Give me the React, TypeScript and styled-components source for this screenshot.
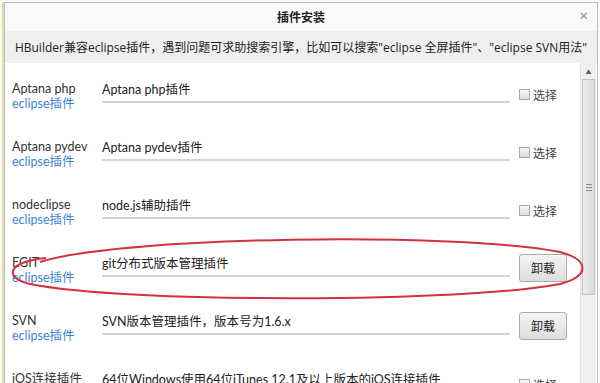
import React from 'react';
import styled, {createGlobalStyle} from "styled-components";

const GlobalStyle = createGlobalStyle`
    html, body {
        margin: 0;
        padding: 0;
        background: #fbfbfb;
        overflow: hidden;
    }
    body {
        font-family: "Open Sans", "Noto Sans CJK SC", sans-serif;
        color: #333;
    }
`

const Page = styled.div`
    position: relative;
    width: 600px;
    height: 383px;
    padding: 2px 2px 0 2px;
    box-sizing: border-box;
    overflow: hidden;
`

const Frame = styled.div`
    display: flex;
    border-left: 2px solid #dde2a4;
    height: 100%;
`

const Dialog = styled.div`
    flex: 1;
    display: flex;
    flex-direction: column;
    border: 1px solid #bdbdbd;
    border-bottom: none;
    background: #ffffff;
    overflow: hidden;
`

const TitleBar = styled.div`
    position: relative;
    height: 28px;
    flex-shrink: 0;
    display: flex;
    align-items: center;
    justify-content: center;
    background: #fafafa;
    font-size: 12px;
    font-weight: bold;
    color: #222;
`

const CloseButton = styled.span`
    position: absolute;
    right: 9px;
    top: 2px;
    font-size: 15px;
    line-height: 20px;
    font-weight: normal;
    color: #888;
`

const InfoBar = styled.div`
    height: 32px;
    flex-shrink: 0;
    display: flex;
    align-items: center;
    justify-content: center;
    background: #efefef;
    font-size: 12px;
    color: #222;
    white-space: nowrap;
`

const Body = styled.div`
    flex-shrink: 0;
    display: flex;
`

const List = styled.div`
    flex: 1;
    display: flex;
    flex-direction: column;
    font-family: "Lato", "Noto Sans CJK SC", sans-serif;
`

const Row = styled.div`
    height: 58px;
    flex-shrink: 0;
    display: flex;
    align-items: flex-start;
    padding-left: 7px;
`

const NameCol = styled.div`
    width: 90px;
    padding-top: 18px;
    display: flex;
    flex-direction: column;
    font-size: 12.5px;
    line-height: 15px;
`

const Name = styled.span`
    color: #333;
    white-space: nowrap;
`

const Link = styled.span`
    color: #3d84d6;
`

const Desc = styled.div`
    width: 408px;
    margin-top: 18px;
    padding-bottom: 2px;
    font-size: 12.5px;
    line-height: 18px;
    color: #222;
    border-bottom: 2px solid #d6d6d6;
    white-space: nowrap;
`

const Action = styled.div`
    margin-left: 9px;
    height: 28px;
    margin-top: 17px;
    display: flex;
    align-items: center;
`

const CheckLabel = styled.label`
    display: flex;
    align-items: center;
    gap: 3px;
    font-size: 12px;
    color: #444;
`

const CheckBox = styled.span`
    width: 9px;
    height: 9px;
    border: 1px solid #a9a9a9;
    background: linear-gradient(#f6f6f6, #dcdcdc);
`

const Button = styled.button`
    width: 48px;
    height: 28px;
    padding: 0;
    border: 1px solid #acacac;
    border-radius: 3px;
    background: linear-gradient(#f4f4f4, #dedede);
    font-family: "Open Sans", "Noto Sans CJK SC", sans-serif;
    font-size: 12px;
    color: #222;
`

const Scrollbar = styled.div`
    width: 15px;
    margin-right: 1px;
    display: flex;
    flex-direction: column;
    background: #efefef;
    border-left: 1px solid #e2e2e2;
`

const Arrow = styled.div`
    height: 16px;
    display: flex;
    align-items: center;
    justify-content: center;
    font-size: 6px;
    color: #606060;
`

const Thumb = styled.div`
    height: 214px;
    margin: 0 1px;
    display: flex;
    align-items: center;
    justify-content: center;
    border: 1px solid #c3c3c3;
    background: linear-gradient(90deg, #ececec, #dadada);
`

const Grip = styled.div`
    width: 6px;
    height: 5px;
    border-top: 1px solid #888;
    border-bottom: 1px solid #888;
    position: relative;
    &::after {
        content: "";
        position: absolute;
        left: 0;
        right: 0;
        top: 2px;
        border-top: 1px solid #888;
    }
`

const Annotation = styled.svg`
    position: absolute;
    left: 0;
    top: 0;
    pointer-events: none;
`

type Plugin = {
    name: string
    link?: string
    desc: string
    installed: boolean
}

const plugins: Plugin[] = [
    {name: "Aptana php", link: "eclipse插件", desc: "Aptana php插件", installed: false},
    {name: "Aptana pydev", link: "eclipse插件", desc: "Aptana pydev插件", installed: false},
    {name: "nodeclipse", link: "eclipse插件", desc: "node.js辅助插件", installed: false},
    {name: "EGIT", link: "eclipse插件", desc: "git分布式版本管理插件", installed: true},
    {name: "SVN", link: "eclipse插件", desc: "SVN版本管理插件，版本号为1.6.x", installed: true},
    {name: "iOS连接插件", desc: "64位Windows使用64位iTunes 12.1及以上版本的iOS连接插件", installed: false},
]

export default function App() {
    return (
        <>
            <GlobalStyle/>
            <Page>
                <Frame>
                    <Dialog>
                        <TitleBar>
                            插件安装
                            <CloseButton>×</CloseButton>
                        </TitleBar>
                        <InfoBar>
                            HBuilder兼容eclipse插件，遇到问题可求助搜索引擎，比如可以搜索"eclipse 全屏插件"、"eclipse SVN用法"
                        </InfoBar>
                        <Body>
                            <List>
                                {plugins.map(p => (
                                    <Row key={p.name}>
                                        <NameCol>
                                            <Name>{p.name}</Name>
                                            {p.link && <Link>{p.link}</Link>}
                                        </NameCol>
                                        <Desc>{p.desc}</Desc>
                                        <Action>
                                            {p.installed
                                                ? <Button>卸载</Button>
                                                : <CheckLabel><CheckBox/>选择</CheckLabel>}
                                        </Action>
                                    </Row>
                                ))}
                            </List>
                            <Scrollbar>
                                <Arrow>▲</Arrow>
                                <Thumb><Grip/></Thumb>
                            </Scrollbar>
                        </Body>
                    </Dialog>
                </Frame>
                <Annotation width="600" height="383" viewBox="0 0 600 383">
                    <path
                        d="M 40 262 C 120 236, 460 232, 560 252 C 590 260, 590 276, 560 284 C 470 302, 130 304, 30 284 C 4 278, 6 262, 46 258"
                        fill="none"
                        stroke="#d3313f"
                        strokeWidth="2"
                    />
                </Annotation>
            </Page>
        </>
    )
}
